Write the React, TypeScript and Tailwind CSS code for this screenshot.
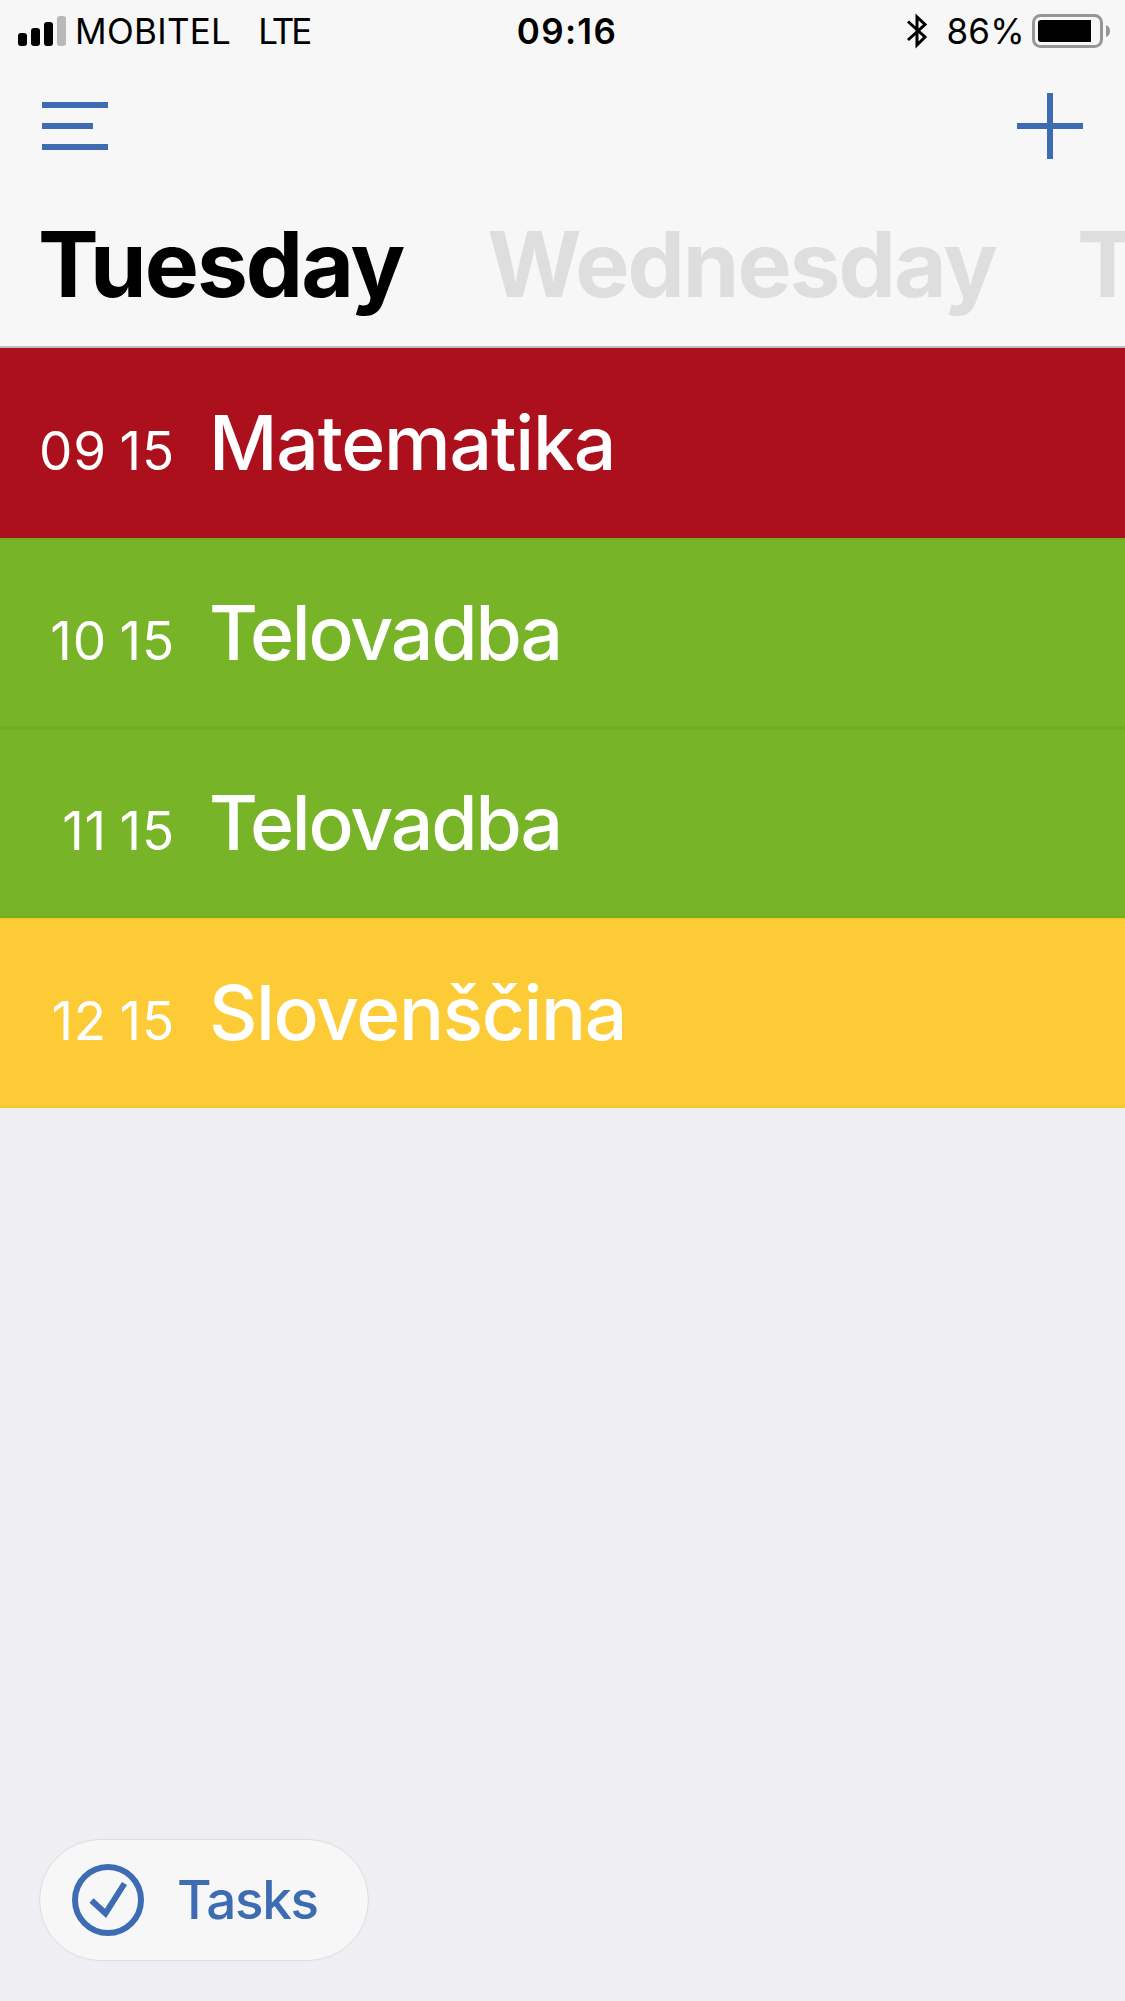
import clsx from "clsx";

type Lesson = {
  id: number;
  hour: string;
  minute: string;
  subject: string;
  row: string;
  tracking: string;
};

const lessons: Lesson[] = [
  { id: 1, hour: "09", minute: "15", subject: "Matematika", row: "bg-[#ab101c] border-[#ab101c]", tracking: "tracking-[-1.2px]" },
  { id: 2, hour: "10", minute: "15", subject: "Telovadba", row: "bg-[#78b428] border-[#70b020]", tracking: "tracking-[-2.15px]" },
  { id: 3, hour: "11", minute: "15", subject: "Telovadba", row: "bg-[#78b428] border-[#70b020]", tracking: "tracking-[-2.15px]" },
  { id: 4, hour: "12", minute: "15", subject: "Slovenščina", row: "bg-[#fdcb35] border-[#fac62c]", tracking: "tracking-[-1.4px]" },
];

function StatusBar() {
  return (
    <div className="grid h-[62px] grid-cols-[1fr_auto_1fr] items-center pr-[15px] pl-[18px] text-[35px] leading-[42px]">
      <div className="flex items-center">
        <svg width="48" height="30" viewBox="0 0 48 30">
          <rect x="0" y="17" width="9" height="13" rx="3" />
          <rect x="13" y="12" width="9" height="18" rx="3" />
          <rect x="26" y="6" width="9" height="24" rx="3" />
          <rect x="39" y="0" width="9" height="30" rx="3" fill="#b9b9b9" />
        </svg>
        <span className="ml-[9px] tracking-[0.3px]">MOBITEL</span>
        <span className="ml-[27px] tracking-[-3px]">LTE</span>
      </div>
      <span className="pl-[6px] font-semibold tracking-[1.3px]">09:16</span>
      <div className="flex items-center justify-end">
        <svg width="22" height="38" viewBox="0 0 22 38" fill="none" stroke="#000" strokeWidth="3">
          <path d="M2 9.5 L19 25 L11 33 V5 L19 12.5 L2 28" />
        </svg>
        <span className="ml-[18px] tracking-[0.3px]">86%</span>
        <svg className="ml-[7px]" width="78" height="34" viewBox="0 0 78 34">
          <rect x="1.5" y="1.5" width="68" height="31" rx="7" fill="none" stroke="#969696" strokeWidth="3" />
          <path d="M9 6 H59 V28 H9 Q6 28 6 25 V9 Q6 6 9 6 Z" />
          <path d="M74 11 Q78 12.5 78 17 Q78 21.5 74 23 Z" fill="#969696" />
        </svg>
      </div>
    </div>
  );
}

function Header() {
  return (
    <header className="h-[348px] overflow-hidden border-b-2 border-[#bdbdbf] bg-[#f7f7f7]">
      <StatusBar />
      <nav className="flex h-[97px] items-end justify-between px-[42px]">
        <button aria-label="Menu" className="flex h-[66px] flex-col justify-center gap-[15px]">
          <span className="h-1.5 w-[66px] bg-[#3d6cb3]" />
          <span className="h-1.5 w-[51px] bg-[#3d6cb3]" />
          <span className="h-1.5 w-[66px] bg-[#3d6cb3]" />
        </button>
        <button aria-label="Add">
          <svg width="66" height="66" viewBox="0 0 66 66" stroke="#3d6cb3" strokeWidth="6">
            <path d="M33 0 V66 M0 33 H66" />
          </svg>
        </button>
      </nav>
      <div className="mt-[50px] flex gap-[83px] pl-[38px] text-[91px] leading-[110px] font-bold tracking-[-2px] whitespace-nowrap">
        <span className="text-black">Tuesday</span>
        <span className="ml-px text-[#dedede]">Wednesday</span>
        <span className="-ml-0.5 text-[#dedede]">Thursday</span>
      </div>
    </header>
  );
}

function LessonRow({ lesson }: { lesson: Lesson }) {
  return (
    <li className={clsx("flex h-[190px] items-baseline border-y-2 pt-12 text-white", lesson.row)}>
      <span className="w-[175px] text-right text-[53px] leading-[64px] tracking-[0.8px] [word-spacing:-3px]">
        {lesson.hour} {lesson.minute}
      </span>
      <span className={clsx("ml-[34px] text-[75px] leading-[90px] font-medium", lesson.tracking)}>
        {lesson.subject}
      </span>
    </li>
  );
}

export default function App() {
  return (
    <main className="flex h-[2001px] w-[1125px] flex-col overflow-hidden bg-[#eeeef3] font-['Inter',sans-serif] text-black">
      <Header />
      <ul>
        {lessons.map((lesson) => (
          <LessonRow key={lesson.id} lesson={lesson} />
        ))}
      </ul>
      <button className="mt-auto mb-10 ml-[39px] flex h-[122px] w-[330px] items-center rounded-full border border-[#dddddf] bg-[#f7f7f7] pl-8 text-[#3d6cb3]">
        <svg width="72" height="72" viewBox="0 0 72 72" fill="none" stroke="currentColor" strokeWidth="6">
          <circle cx="36" cy="36" r="33" />
          <path d="M19.5 36.5 L33.5 49.3 L52.5 19.5" />
        </svg>
        <span className="ml-[33px] text-[53px] leading-[64px] font-medium tracking-[-1.4px]">Tasks</span>
      </button>
    </main>
  );
}
